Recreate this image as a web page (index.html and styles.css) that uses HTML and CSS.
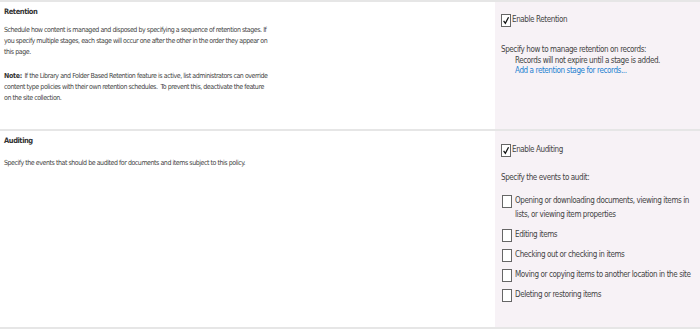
FILE: index.html
```html
<!DOCTYPE html>
<html>
<head>
  <meta charset="UTF-8">
  <title>Information Management Policy Settings</title>
  <link rel="stylesheet" href="styles.css">
</head>
<body>
  <div class="policy">
    <div class="section retention">
      <div class="desc">
        <div class="title">Retention</div>
        <p>Schedule how content is managed and disposed by specifying a sequence of retention stages. If you specify multiple stages, each stage will occur one after the other in the order they appear on this page.</p>
        <p><b>Note:</b> If the Library and Folder Based Retention feature is active, list administrators can override content type policies with their own retention schedules.&nbsp; To prevent this, deactivate the feature on the site collection.</p>
      </div>
      <div class="field">
        <label class="check-row main">
          <span class="box checked"><svg viewBox="0 0 10 12" width="10" height="12"><path d="M2 6.5 L4.2 9.5 L8.2 2" fill="none" stroke="#111" stroke-width="1.6"/></svg></span>
          Enable Retention
        </label>
        <div class="hint">Specify how to manage retention on records:</div>
        <div class="indent">Records will not expire until a stage is added.</div>
        <a class="indent link" href="#">Add a retention stage for records...</a>
      </div>
    </div>
    <div class="section auditing">
      <div class="desc">
        <div class="title">Auditing</div>
        <p>Specify the events that should be audited for documents and items subject to this policy.</p>
      </div>
      <div class="field">
        <label class="check-row main">
          <span class="box checked"><svg viewBox="0 0 10 12" width="10" height="12"><path d="M2 6.5 L4.2 9.5 L8.2 2" fill="none" stroke="#111" stroke-width="1.6"/></svg></span>
          Enable Auditing
        </label>
        <div class="hint">Specify the events to audit:</div>
        <ul class="events">
          <li><span class="box"></span><span>Opening or downloading documents, viewing items in lists, or viewing item properties</span></li>
          <li><span class="box"></span><span>Editing items</span></li>
          <li><span class="box"></span><span>Checking out or checking in items</span></li>
          <li><span class="box"></span><span>Moving or copying items to another location in the site</span></li>
          <li><span class="box"></span><span>Deleting or restoring items</span></li>
        </ul>
      </div>
    </div>
  </div>
</body>
</html>
```

FILE: styles.css
```css
body {
  margin: 0;
  width: 700px;
  background: #fff;
  font-family: "DejaVu Sans Condensed", "Liberation Sans", sans-serif;
  color: #444;
}
.policy {
  border-top: 2px solid #e6e6e6;
  border-bottom: 2px solid #e6e6e6;
}
.section {
  display: flex;
}
.section + .section {
  border-top: 2px solid #e6e6e6;
}
.retention {
  height: 127px;
}
.auditing {
  height: 196px;
}
.desc {
  width: 491px;
  padding: 4px 0 0 4px;
  font-size: 7px;
  letter-spacing: -0.45px;
  line-height: 11px;
}
.desc .title {
  font-weight: bold;
  font-size: 7.5px;
  letter-spacing: -0.45px;
  color: #333;
  margin-bottom: 8px;
}
.desc p {
  margin: 0 0 13px 0;
  width: 266px;
}
.desc b {
  color: #333;
  letter-spacing: -0.3px;
  margin-right: 1px;
}
.auditing .desc .title {
  margin-bottom: 12px;
}
.field {
  flex: 1;
  background: #f7f2f6;
  padding: 12px 0 0 6px;
  font-size: 8px;
  letter-spacing: -0.4px;
  line-height: 10.5px;
  color: #444;
}
.check-row {
  display: flex;
  align-items: center;
  gap: 1px;
}
.box {
  display: inline-flex;
  width: 8px;
  height: 11px;
  border: 1px solid #666;
  background: #fff;
  flex-shrink: 0;
}
.box svg {
  width: 8px;
  height: 11px;
}
.hint {
  margin-top: 18px;
}
.indent {
  display: block;
  padding-left: 14px;
}
.link {
  color: #1d7fd0;
  text-decoration: none;
}
.auditing .field {
  padding-top: 13px;
}
.auditing .hint {
  margin-top: 16px;
}
.events {
  list-style: none;
  margin: 10px 0 0 0;
  padding: 0 0 0 1px;
}
.events li {
  display: flex;
  align-items: flex-start;
  gap: 3px;
  margin-bottom: 6px;
  width: 196px;
  line-height: 14px;
}
.events li .box {
  margin-top: 1px;
}
```
